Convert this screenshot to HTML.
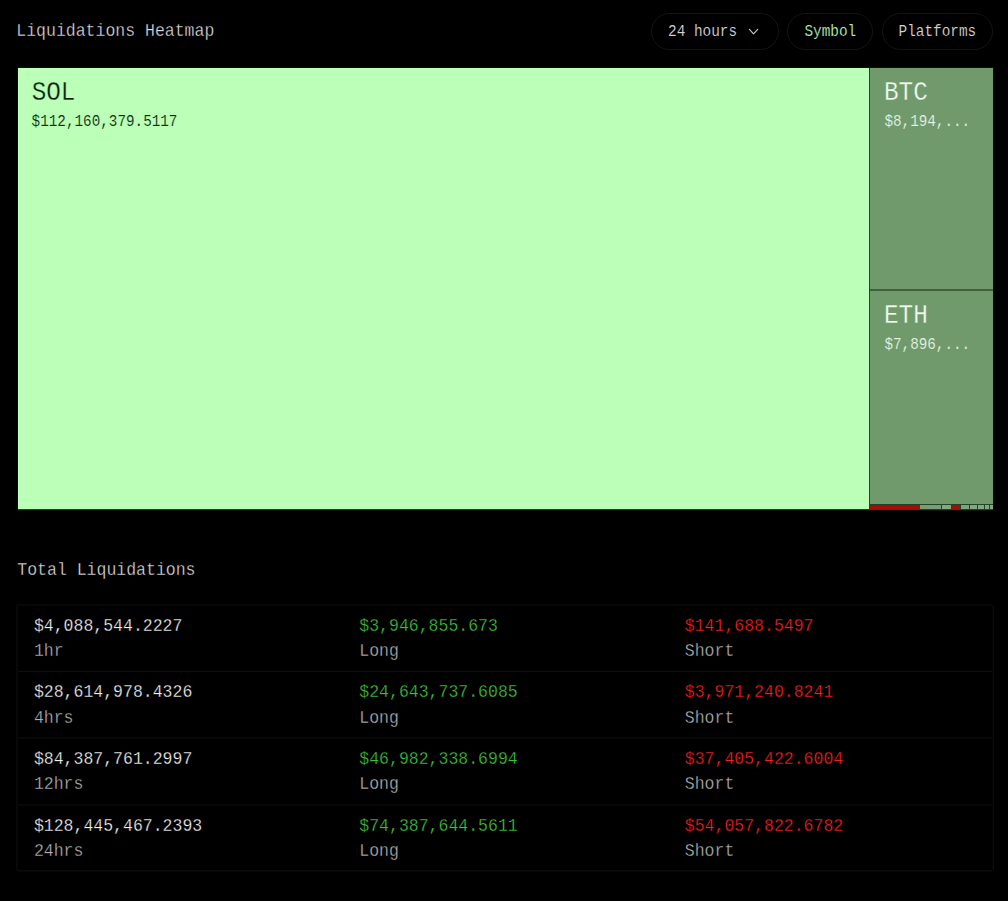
<!DOCTYPE html>
<html><head><meta charset="utf-8">
<style>
html,body{margin:0;padding:0;background:#000;width:1008px;height:901px;overflow:hidden;}
body{position:relative;font-family:"Liberation Mono",monospace;}
.t{position:absolute;white-space:pre;line-height:1;transform-origin:0 76.6%;transform:scaleY(1.13);-webkit-text-stroke:0.25px #000;}
.lt{-webkit-text-stroke-color:#bcffb8;}
.gt{-webkit-text-stroke-color:#709a6c;}
.pill{position:absolute;box-sizing:border-box;border:1px solid #141414;border-radius:20px;}
.c{position:absolute;box-sizing:border-box;}
</style></head><body>
<div class="t" style="left:16.30px;top:24.46px;font-size:16.5px;color:#dadada;">Liquidations Heatmap</div>
<div class="pill" style="left:651px;top:13px;width:128px;height:37px"></div>
<div class="t" style="left:668.00px;top:25.17px;font-size:14.4px;color:#d4d4d4;-webkit-text-stroke-width:0.12px;">24 hours</div>
<svg style="position:absolute;left:748px;top:27px" width="12" height="9" viewBox="0 0 12 9"><path d="M1.4 2.4 L5.5 6.8 L9.7 2.3" fill="none" stroke="#c4c4c4" stroke-width="1.2" stroke-linecap="round" stroke-linejoin="round"/></svg>
<div class="pill" style="left:787px;top:13px;width:86px;height:37px"></div>
<div class="t" style="left:804.40px;top:25.17px;font-size:14.4px;color:#b4f0b4;-webkit-text-stroke-width:0.12px;">Symbol</div>
<div class="pill" style="left:882px;top:13px;width:111px;height:37px"></div>
<div class="t" style="left:898.50px;top:25.17px;font-size:14.4px;color:#d4d4d4;-webkit-text-stroke-width:0.12px;">Platforms</div>
<div class="c" style="left:17px;top:67px;width:977.00px;height:444.00px;background:#081208"></div>
<div class="c" style="left:18px;top:68px;width:975.00px;height:442.00px;background:#1e4620"></div>
<div class="c" style="left:18px;top:68px;width:851.00px;height:441.00px;background:#bcffb8"></div>
<div class="c" style="left:870px;top:68px;width:123.00px;height:221.00px;background:#709a6c"></div>
<div class="c" style="left:870px;top:289px;width:123.00px;height:2.00px;background:#3f613e"></div>
<div class="c" style="left:870px;top:291px;width:123.00px;height:213.00px;background:#709a6c"></div>
<div class="c" style="left:870px;top:505px;width:49.60px;height:4.00px;background:#aa0a0a"></div>
<div class="c" style="left:920.3px;top:505px;width:20.80px;height:4.00px;background:#7a9c77"></div>
<div class="c" style="left:941.8px;top:505px;width:9.20px;height:4.00px;background:#86a683"></div>
<div class="c" style="left:951.6px;top:505px;width:8.80px;height:4.00px;background:#aa0a0a"></div>
<div class="c" style="left:961px;top:505px;width:7.50px;height:4.00px;background:#7fa37c"></div>
<div class="c" style="left:969.5px;top:505px;width:7.40px;height:4.00px;background:#86a683"></div>
<div class="c" style="left:977.5px;top:505px;width:6.80px;height:4.00px;background:#86a683"></div>
<div class="c" style="left:985px;top:505px;width:4.00px;height:4.00px;background:#86a683"></div>
<div class="c" style="left:989.5px;top:505px;width:3.50px;height:4.00px;background:#86a683"></div>
<div class="t lt" style="left:31.70px;top:82.39px;font-size:24.3px;color:#0a1f0a;">SOL</div>
<div class="t lt" style="left:31.60px;top:115.45px;font-size:14.3px;color:#0f2a0f;-webkit-text-stroke-width:0.12px;">$112,160,379.5117</div>
<div class="t gt" style="left:884.00px;top:82.39px;font-size:24.3px;color:#f2faf0;">BTC</div>
<div class="t gt" style="left:884.40px;top:115.35px;font-size:14.3px;color:#e6f2e2;-webkit-text-stroke-width:0.12px;">$8,194,...</div>
<div class="t gt" style="left:884.00px;top:305.29px;font-size:24.3px;color:#f2faf0;">ETH</div>
<div class="t gt" style="left:884.40px;top:337.95px;font-size:14.3px;color:#e6f2e2;-webkit-text-stroke-width:0.12px;">$7,896,...</div>
<div class="t" style="left:17.30px;top:562.76px;font-size:16.5px;color:#dadada;">Total Liquidations</div>
<div class="c" style="left:17px;top:670px;width:975px;height:1px;background:rgb(1,1,1)"></div>
<div class="c" style="left:17px;top:671px;width:975px;height:1px;background:rgb(15,15,15)"></div>
<div class="c" style="left:17px;top:672px;width:975px;height:1px;background:rgb(1,1,1)"></div>
<div class="c" style="left:17px;top:737px;width:975px;height:1px;background:rgb(10,10,10)"></div>
<div class="c" style="left:17px;top:738px;width:975px;height:1px;background:rgb(6,6,6)"></div>
<div class="c" style="left:17px;top:804px;width:975px;height:1px;background:rgb(8,8,8)"></div>
<div class="c" style="left:17px;top:805px;width:975px;height:1px;background:rgb(8,8,8)"></div>
<div class="c" style="left:17px;top:604px;width:975px;height:1px;background:rgb(8,8,8)"></div>
<div class="c" style="left:17px;top:605px;width:975px;height:1px;background:rgb(8,8,8)"></div>
<div class="c" style="left:17px;top:870px;width:975px;height:1px;background:rgb(10,10,10)"></div>
<div class="c" style="left:17px;top:871px;width:975px;height:1px;background:rgb(6,6,6)"></div>
<div class="c" style="left:16px;top:605px;width:1px;height:265px;background:rgb(8,8,8)"></div>
<div class="c" style="left:17px;top:605px;width:1px;height:265px;background:rgb(8,8,8)"></div>
<div class="c" style="left:992px;top:605px;width:1px;height:265px;background:rgb(5,5,5)"></div>
<div class="c" style="left:993px;top:605px;width:1px;height:265px;background:rgb(12,12,12)"></div>
<div class="t" style="left:33.90px;top:618.56px;font-size:16.5px;color:#f2f2f2;">$4,088,544.2227</div>
<div class="t" style="left:33.90px;top:644.16px;font-size:16.5px;color:#b0b0b0;">1hr</div>
<div class="t" style="left:359.30px;top:618.56px;font-size:16.5px;color:#3cc23c;">$3,946,855.673</div>
<div class="t" style="left:359.30px;top:644.16px;font-size:16.5px;color:#b0b0b0;">Long</div>
<div class="t" style="left:684.80px;top:618.56px;font-size:16.5px;color:#f21e1e;">$141,688.5497</div>
<div class="t" style="left:684.80px;top:644.16px;font-size:16.5px;color:#b0b0b0;">Short</div>
<div class="t" style="left:33.90px;top:685.21px;font-size:16.5px;color:#f2f2f2;">$28,614,978.4326</div>
<div class="t" style="left:33.90px;top:710.81px;font-size:16.5px;color:#b0b0b0;">4hrs</div>
<div class="t" style="left:359.30px;top:685.21px;font-size:16.5px;color:#3cc23c;">$24,643,737.6085</div>
<div class="t" style="left:359.30px;top:710.81px;font-size:16.5px;color:#b0b0b0;">Long</div>
<div class="t" style="left:684.80px;top:685.21px;font-size:16.5px;color:#f21e1e;">$3,971,240.8241</div>
<div class="t" style="left:684.80px;top:710.81px;font-size:16.5px;color:#b0b0b0;">Short</div>
<div class="t" style="left:33.90px;top:751.86px;font-size:16.5px;color:#f2f2f2;">$84,387,761.2997</div>
<div class="t" style="left:33.90px;top:777.46px;font-size:16.5px;color:#b0b0b0;">12hrs</div>
<div class="t" style="left:359.30px;top:751.86px;font-size:16.5px;color:#3cc23c;">$46,982,338.6994</div>
<div class="t" style="left:359.30px;top:777.46px;font-size:16.5px;color:#b0b0b0;">Long</div>
<div class="t" style="left:684.80px;top:751.86px;font-size:16.5px;color:#f21e1e;">$37,405,422.6004</div>
<div class="t" style="left:684.80px;top:777.46px;font-size:16.5px;color:#b0b0b0;">Short</div>
<div class="t" style="left:33.90px;top:818.51px;font-size:16.5px;color:#f2f2f2;">$128,445,467.2393</div>
<div class="t" style="left:33.90px;top:844.11px;font-size:16.5px;color:#b0b0b0;">24hrs</div>
<div class="t" style="left:359.30px;top:818.51px;font-size:16.5px;color:#3cc23c;">$74,387,644.5611</div>
<div class="t" style="left:359.30px;top:844.11px;font-size:16.5px;color:#b0b0b0;">Long</div>
<div class="t" style="left:684.80px;top:818.51px;font-size:16.5px;color:#f21e1e;">$54,057,822.6782</div>
<div class="t" style="left:684.80px;top:844.11px;font-size:16.5px;color:#b0b0b0;">Short</div>
</body></html>
